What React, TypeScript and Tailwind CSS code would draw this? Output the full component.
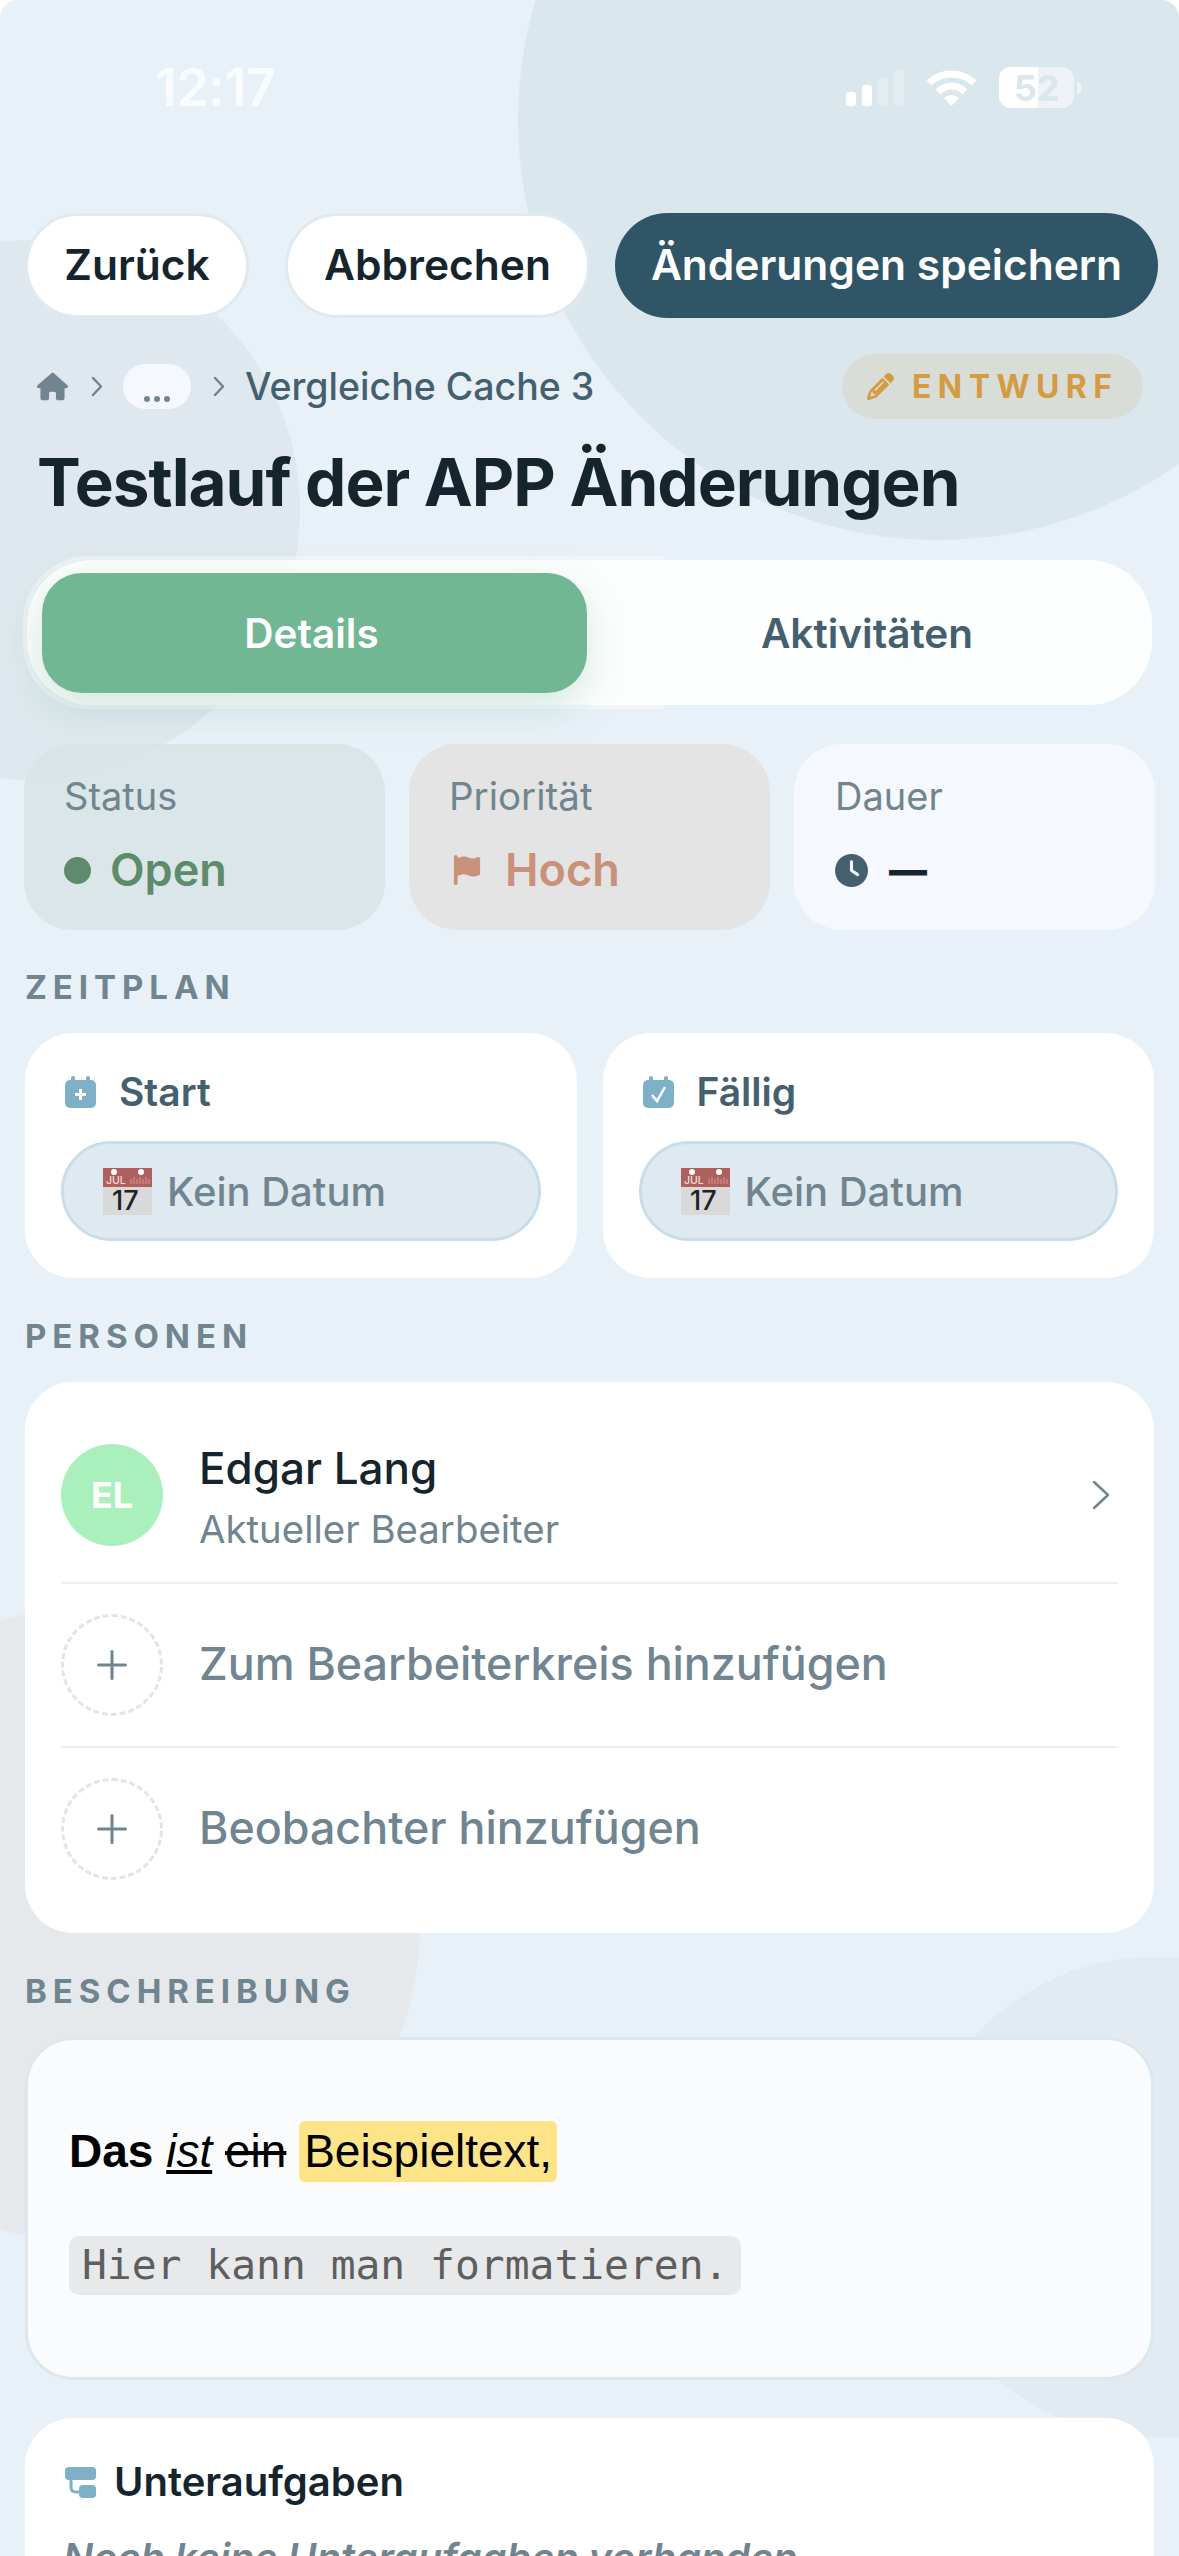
import React from 'react';
import { FaFlag, FaClock, FaPencil, FaHouse } from 'react-icons/fa6';
import { Plus } from 'lucide-react';

const SectionLabel = ({ children, className }: { children: React.ReactNode; className: string }) => (
  <div className={`text-[33px] leading-[40px] font-bold tracking-[0.18em] text-[#70858f] ${className}`}>{children}</div>
);

const Chevron = ({ w, h, width = 2.5 }: { w: number; h: number; width?: number }) => (
  <svg width={w} height={h} viewBox={`0 0 ${w} ${h}`} fill="none" stroke="#70858f" strokeWidth={width} strokeLinecap="round" strokeLinejoin="round" className="shrink-0">
    <path d={`M2 2 L${w - 2} ${h / 2} L2 ${h - 2}`} />
  </svg>
);

const CalendarEmoji = () => (
  <svg width="49" height="47" viewBox="0 0 49 47" className="shrink-0">
    <rect width="49" height="47" fill="#d9d9d9" />
    <rect width="49" height="19" fill="#b05f5f" />
    <circle cx="11" cy="4" r="3" fill="#fff" />
    <circle cx="38" cy="4" r="3" fill="#fff" />
    <path d="M28 16 V11 M31 16 V9 M34 16 V11 M37 16 V9 M40 16 V11 M43 16 V9 M46 16 V11" stroke="#d99a9a" strokeWidth="1" />
    <text x="3" y="16" fontSize="10.5" fill="#f3dcdc" fontFamily="Inter, sans-serif">JUL</text>
    <text x="9" y="42" fontSize="27" fill="#222" fontFamily="Inter, sans-serif">17</text>
  </svg>
);

const CalendarBadge = ({ kind }: { kind: 'plus' | 'check' }) => (
  <svg width="31" height="32" viewBox="0 0 31 32" className="shrink-0">
    <rect x="6" y="0" width="4" height="8" rx="2" fill="#7eb0c7" />
    <rect x="21" y="0" width="4" height="8" rx="2" fill="#7eb0c7" />
    <rect x="0" y="4" width="31" height="28" rx="5" fill="#7eb0c7" />
    {kind === 'plus' ? (
      <path d="M15.5 13 V24 M10 18.5 H21" stroke="#fff" strokeWidth="3" fill="none" />
    ) : (
      <path d="M9 19 L14 25 L22 11" stroke="#fff" strokeWidth="2.5" fill="none" />
    )}
  </svg>
);

const DateCard = ({ icon, label, className }: { icon: React.ReactNode; label: string; className: string }) => (
  <div className={`h-[245px] bg-white rounded-[48px] px-[36px] pt-[39px] ${className}`}>
    <div className="flex items-center h-[40px] pl-[4px] gap-[23px] text-[39px] font-semibold text-[#44606f]">
      {icon}
      <span>{label}</span>
    </div>
    <div className="mt-[29px] h-[100px] rounded-full bg-[#dfe9f0] border-[3px] border-[#c9dde8] flex items-center pl-[39px] gap-[15px] text-[40px] font-medium text-[#70858f]">
      <CalendarEmoji />
      <span className="pt-[2px]">Kein Datum</span>
    </div>
  </div>
);

const AddRow = ({ label }: { label: string }) => (
  <div className="h-[162px] flex items-center gap-[36px]">
    <div className="w-[102px] h-[102px] rounded-full border-[3px] border-dashed border-[#dde6eb] flex items-center justify-center">
      <Plus size={46} strokeWidth={1.6} color="#70858f" />
    </div>
    <span className="text-[44.8px] font-medium text-[#70858f]">{label}</span>
  </div>
);

export default function App() {
  return (
    <div className="relative w-[1179px] h-[2556px] overflow-hidden rounded-t-[18px] bg-[#e9f1f8] font-[Inter,sans-serif]">
      {/* background blobs */}
      <div className="absolute left-[518px] top-[-300px] w-[840px] h-[840px] rounded-full bg-[#dae7ed]" />
      <div className="absolute left-[-240px] top-[240px] w-[540px] h-[540px] rounded-full bg-[#dfe8ee]" />
      <div className="absolute left-[-220px] top-[1605px] w-[640px] h-[640px] rounded-full bg-[#e6e9ec]" />
      <div className="absolute left-[913px] top-[1957px] w-[520px] h-[480px] rounded-full bg-[#e2ebf2]" />

      <div className="relative">
        {/* status bar */}
        <div className="h-[213px] flex items-start justify-between pt-[60px] pl-[155px] pr-[98px]">
          <span className="text-[52px] leading-[56px] font-semibold text-white/75 tracking-[-0.01em]">12:17</span>
          <div className="flex items-center gap-[22px] pt-[7px]">
            <svg width="58" height="37" viewBox="0 0 58 37">
              <rect x="0" y="23" width="10" height="14" rx="3" fill="#fff" />
              <rect x="16" y="16" width="10" height="21" rx="3" fill="#fff" />
              <rect x="32" y="8" width="10" height="29" rx="3" fill="#fff" opacity="0.25" />
              <rect x="48" y="0" width="10" height="37" rx="3" fill="#fff" opacity="0.25" />
            </svg>
            <svg width="51" height="37" viewBox="0 0 51 37" fill="none" stroke="#fff">
              <path d="M3 14 C16 2 35 2 48 14" strokeWidth="7" />
              <path d="M12 23 C20 15 31 15 39 23" strokeWidth="7" />
              <path d="M18 29 L25.5 37 L33 29 C28 25 23 25 18 29Z" fill="#fff" stroke="none" />
            </svg>
            <div className="flex items-center gap-[3px]">
              <div className="relative w-[75px] h-[41px] rounded-[12px] bg-white/50 overflow-hidden flex items-center justify-center text-[36px] font-bold text-[#dae7ed]">
                <div className="absolute left-0 top-0 bottom-0 w-[39px] bg-white" />
                <span className="relative leading-none">52</span>
              </div>
              <div className="w-[4px] h-[12px] rounded-r-full bg-white/50" />
            </div>
          </div>
        </div>

        {/* actions */}
        <div className="flex items-center pl-[25px] h-[105px] text-[42.5px] font-semibold">
          <button className="w-[224px] h-[105px] pb-[2px] rounded-full bg-white border-[3px] border-[#dfe9f0] text-[#16252d]">Zurück</button>
          <button className="ml-[36px] w-[305px] h-[105px] pb-[2px] rounded-full bg-white border-[3px] border-[#dfe9f0] text-[#16252d]">Abbrechen</button>
          <button className="ml-[25px] w-[543px] h-[105px] pb-[2px] rounded-full bg-[#2f5567] text-white">Änderungen speichern</button>
        </div>

        {/* breadcrumb */}
        <div className="mt-[36px] h-[65px] pl-[37px] pr-[36px] flex items-center">
          <FaHouse size={31} color="#70858f" />
          <div className="ml-[23px]"><Chevron w={12} h={21} /></div>
          <div className="ml-[20px] w-[68px] h-[45px] rounded-full bg-[#f5f9fd] flex items-end justify-center pb-[7px] gap-[4px]">
            <span className="w-[6px] h-[6px] rounded-full bg-[#70858f]" />
            <span className="w-[6px] h-[6px] rounded-full bg-[#70858f]" />
            <span className="w-[6px] h-[6px] rounded-full bg-[#70858f]" />
          </div>
          <div className="ml-[22px]"><Chevron w={12} h={21} /></div>
          <span className="ml-[20px] pt-[2px] text-[37.5px] font-medium text-[#44606f]">Vergleiche Cache 3</span>
          <div className="ml-auto w-[301px] h-[65px] rounded-full bg-[#d9ddd8] flex items-center pl-[25px] gap-[18px] text-[32px] font-bold tracking-[0.2em] text-[#d59b43]">
            <FaPencil size={27} />
            <span>ENTWURF</span>
          </div>
        </div>

        {/* title */}
        <h1 className="mt-[25px] pl-[37px] h-[76px] text-[65.6px] leading-[76px] font-bold tracking-[-0.015em] text-[#16252d]">Testlauf der APP Änderungen</h1>

        {/* tabs */}
        <div className="mt-[40px] ml-[27px] w-[1125px] h-[145px] rounded-[64px] bg-white/90 pl-[15px] pt-[13px] flex relative">
          <div className="absolute left-[-4px] top-[-4px] w-[640px] h-[153px] rounded-l-[66px] border-[4px] border-r-0 border-white/40" />
          <div className="relative w-[545px] h-[120px] pr-[6px] pt-[2px] rounded-[40px] bg-[#72b794] shadow-[0_14px_40px_rgba(114,183,148,0.3)] flex items-center justify-center text-[40.5px] font-semibold text-white">Details</div>
          <div className="relative w-[550px] h-[120px] pl-[10px] pt-[2px] flex items-center justify-center text-[40.5px] font-semibold text-[#44606f]">Aktivitäten</div>
        </div>

        {/* stats */}
        <div className="mt-[39px] px-[24px] flex gap-[24px]">
          <div className="w-[361px] h-[186px] rounded-[48px] bg-[#d8e4e4]/90 pl-[40px] pt-[30px]">
            <div className="text-[38px] leading-[44px] text-[#70858f]">Status</div>
            <div className="mt-[25px] flex items-center gap-[19px] text-[45px] leading-[54px] font-semibold text-[#5e8b6c]">
              <span className="w-[27px] h-[27px] rounded-full bg-[#5e8b6c]" />
              <span>Open</span>
            </div>
          </div>
          <div className="w-[361px] h-[186px] rounded-[48px] bg-[#e4e4e4] pl-[40px] pt-[30px]">
            <div className="text-[38.5px] leading-[44px] text-[#70858f]">Priorität</div>
            <div className="mt-[25px] flex items-center gap-[23px] text-[45px] leading-[54px] font-semibold text-[#c9917a]">
              <FaFlag size={30} className="ml-[3px]" />
              <span>Hoch</span>
            </div>
          </div>
          <div className="w-[361px] h-[186px] rounded-[48px] bg-[#f5f9fd] pl-[41px] pt-[30px]">
            <div className="text-[38px] leading-[44px] text-[#70858f]">Dauer</div>
            <div className="mt-[25px] flex items-center gap-[21px] text-[38px] leading-[54px] font-black text-[#16252d]">
              <FaClock size={33} color="#44606f" />
              <span>—</span>
            </div>
          </div>
        </div>

        <SectionLabel className="mt-[37px] pl-[25px]">ZEITPLAN</SectionLabel>

        {/* schedule */}
        <div className="mt-[26px] px-[25px] flex gap-[26px]">
          <DateCard className="w-[552px]" label="Start" icon={<CalendarBadge kind="plus" />} />
          <DateCard className="w-[552px]" label="Fällig" icon={<CalendarBadge kind="check" />} />
        </div>

        <SectionLabel className="mt-[38px] pl-[25px]">PERSONEN</SectionLabel>

        {/* people */}
        <div className="mt-[26px] mx-[25px] h-[551px] rounded-[48px] bg-white px-[36px]">
          <div className="h-[202px] pt-[26px] flex items-center gap-[36px] border-b-2 border-[#e9f1f8]">
            <div className="w-[102px] h-[102px] rounded-full bg-[#a9f0bc] flex items-center justify-center text-[36px] font-bold text-white">EL</div>
            <div className="flex-1">
              <div className="text-[44px] leading-[54px] font-medium text-[#16252d]">Edgar Lang</div>
              <div className="mt-[13px] text-[38.4px] leading-[42px] text-[#70858f]">Aktueller Bearbeiter</div>
            </div>
            <div className="mr-[8px]"><Chevron w={18} h={30} /></div>
          </div>
          <div className="border-b-2 border-[#e9f1f8]">
            <AddRow label="Zum Bearbeiterkreis hinzufügen" />
          </div>
          <AddRow label="Beobachter hinzufügen" />
        </div>

        <SectionLabel className="mt-[38px] pl-[25px]">BESCHREIBUNG</SectionLabel>

        {/* description */}
        <div className="mt-[26px] mx-[25px] h-[343px] rounded-[48px] bg-[#f9fbfd] border-[3px] border-[#dce7ee] pl-[41px] pt-[81px] font-['Liberation_Sans',sans-serif] text-[46px] text-black">
          <div className="h-[61px] leading-[61px]">
            <b>Das</b> <i className="underline">ist</i> <s>ein</s> <span className="inline-block h-[61px] px-[5px] rounded-[6px] bg-[#fde488]">Beispieltext,</span>
          </div>
          <div className="mt-[54px] inline-block h-[59px] px-[13px] leading-[59px] rounded-[10px] bg-[#e7e9eb] font-['DejaVu_Sans_Mono',monospace] text-[41.3px] text-[#5e5e5e]">Hier kann man formatieren.</div>
        </div>

        {/* subtasks */}
        <div className="mt-[38px] mx-[25px] h-[300px] rounded-t-[48px] bg-white pl-[40px] pt-[44px]">
          <div className="flex items-center gap-[18px] h-[40px] text-[40px] font-semibold text-[#16252d]">
            <svg width="31" height="31" viewBox="0 0 31 31" className="shrink-0">
              <rect x="0" y="0" width="31" height="13" rx="4" fill="#7eb0c7" />
              <rect x="14" y="18" width="17" height="13" rx="4" fill="#7eb0c7" />
              <path d="M6 12 V20 Q6 25 11 25 H15" fill="none" stroke="#7eb0c7" strokeWidth="3" />
            </svg>
            <span>Unteraufgaben</span>
          </div>
          <div className="mt-[33px] -ml-[2px] text-[39.7px] leading-[46px] font-semibold italic text-[#70858f]">Noch keine Unteraufgaben vorhanden</div>
        </div>
      </div>
    </div>
  );
}
